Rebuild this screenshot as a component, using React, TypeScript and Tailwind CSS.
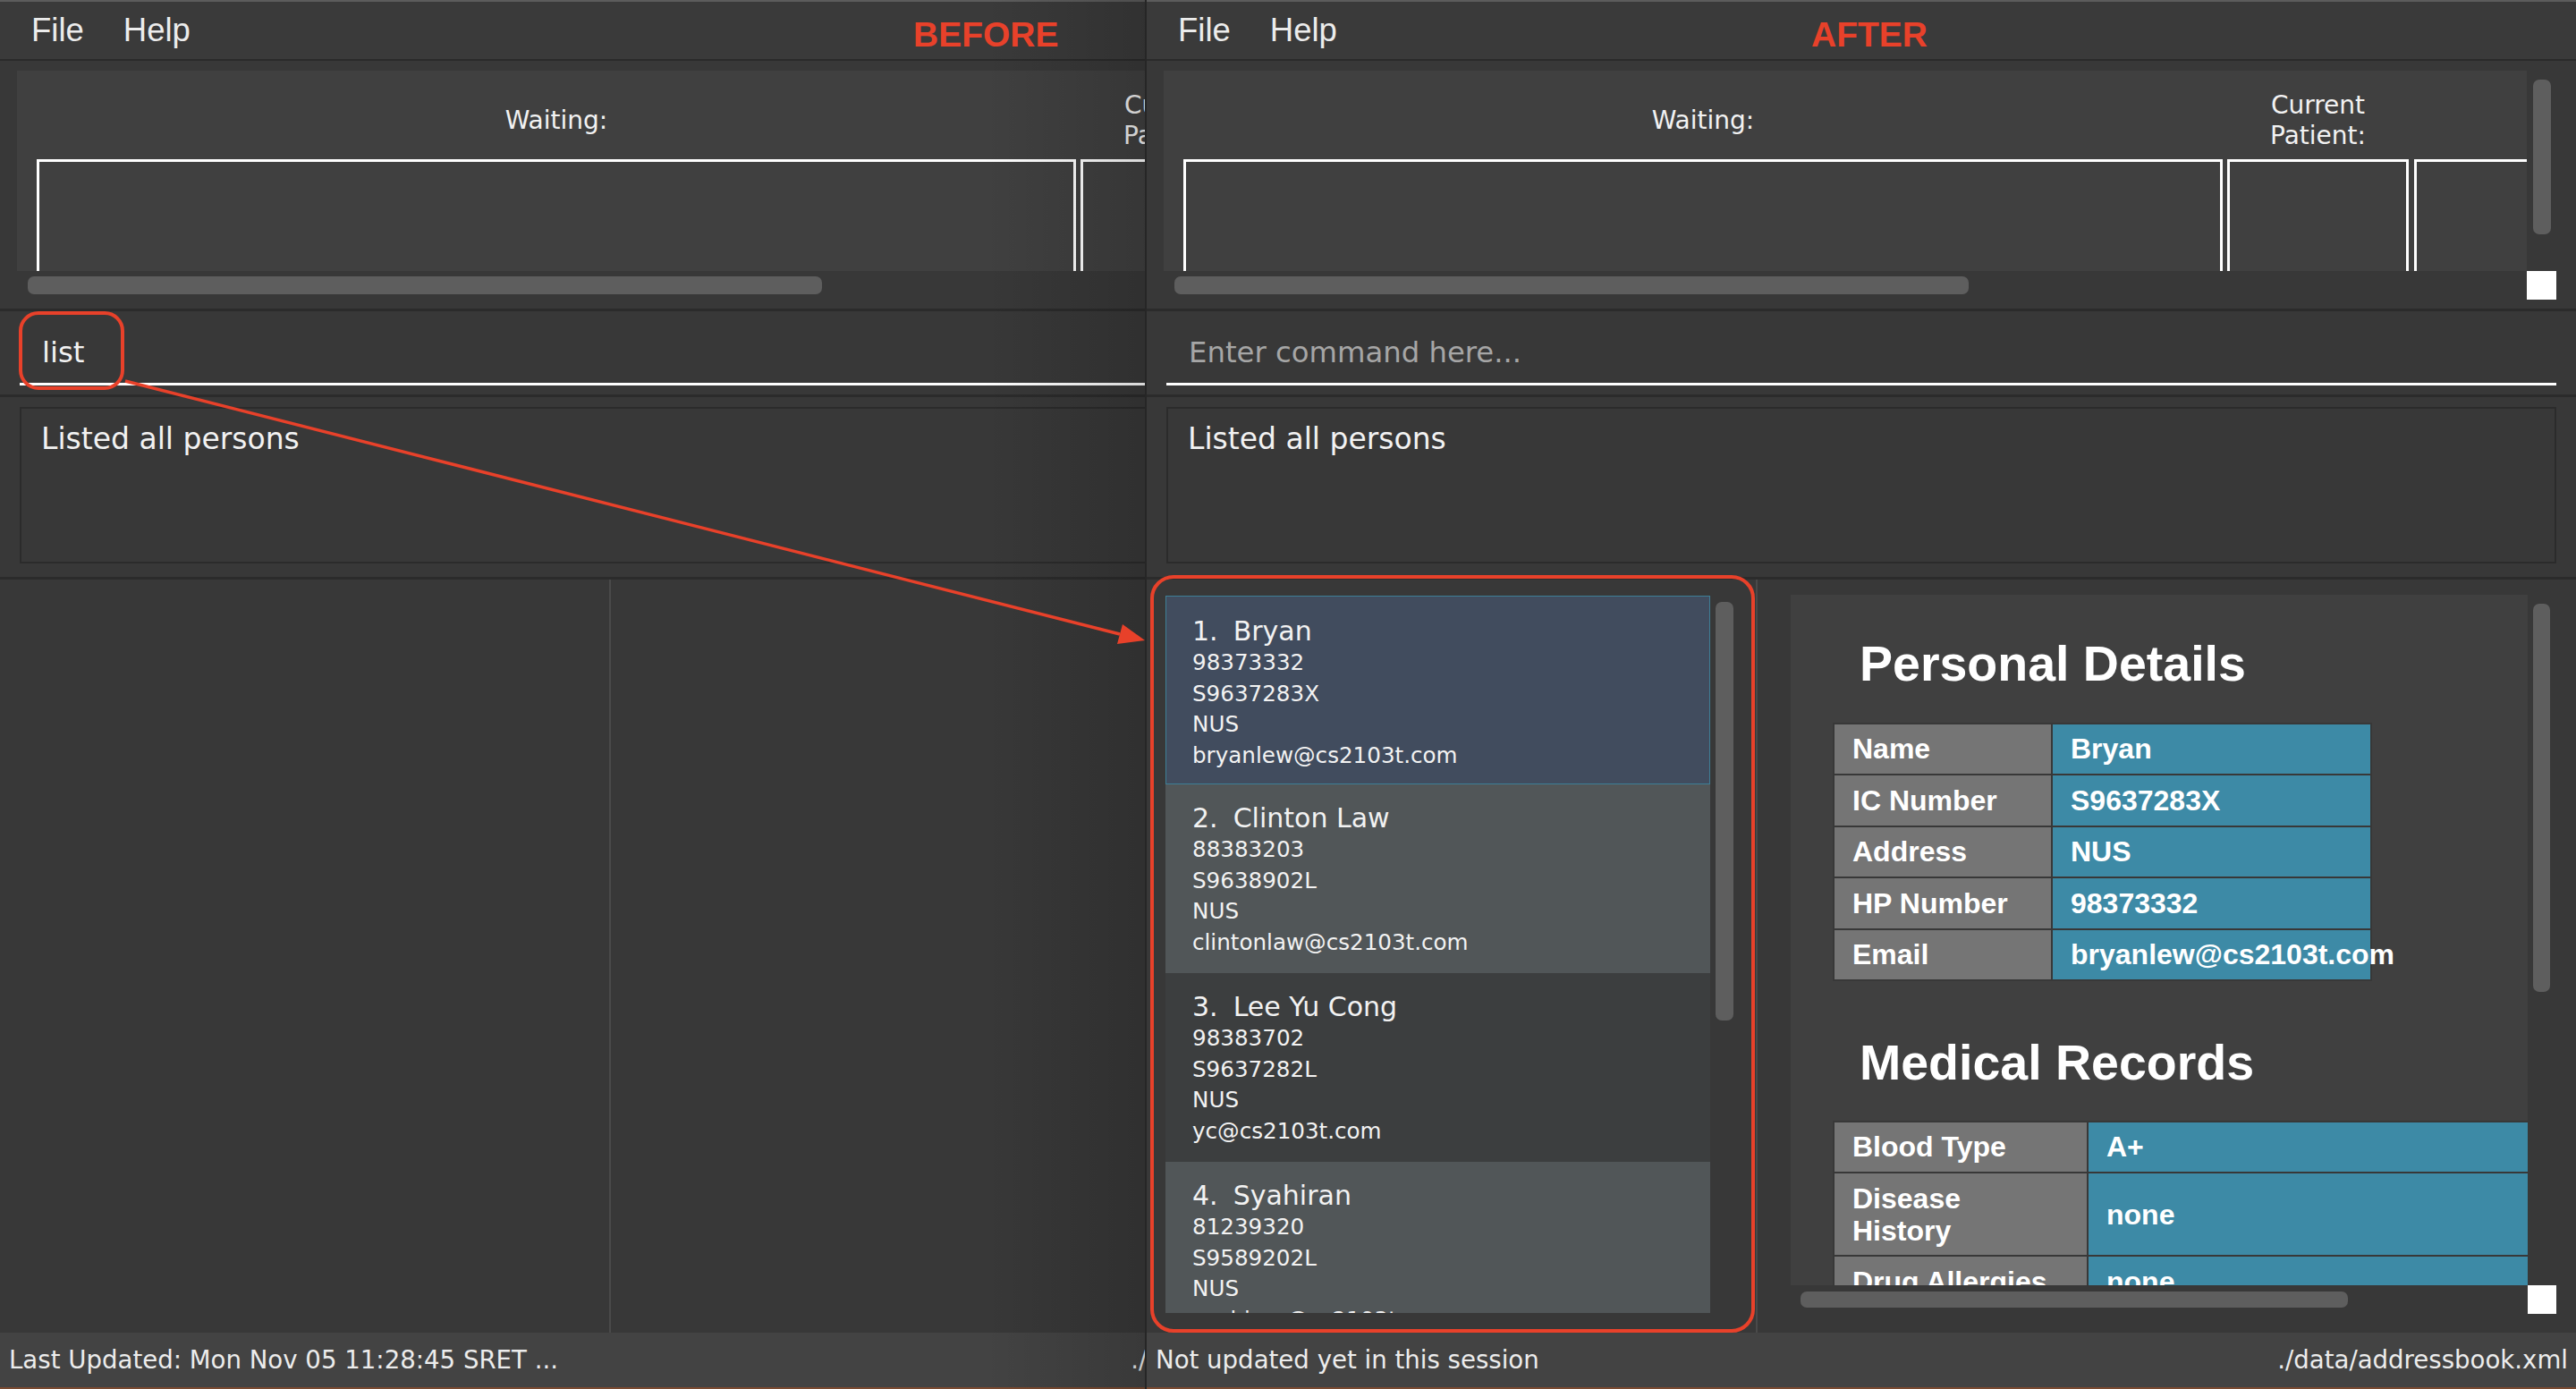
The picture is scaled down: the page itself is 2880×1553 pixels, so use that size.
import React from "react";

const SANS = "font-['Liberation_Sans',Arial,sans-serif]";
const DEJA = "font-['DejaVu_Sans',Verdana,sans-serif]";

type Person = {
  name: string;
  phone: string;
  ic: string;
  address: string;
  email: string;
};

const persons: Person[] = [
  { name: "Bryan", phone: "98373332", ic: "S9637283X", address: "NUS", email: "bryanlew@cs2103t.com" },
  { name: "Clinton Law", phone: "88383203", ic: "S9638902L", address: "NUS", email: "clintonlaw@cs2103t.com" },
  { name: "Lee Yu Cong", phone: "98383702", ic: "S9637282L", address: "NUS", email: "yc@cs2103t.com" },
  { name: "Syahiran", phone: "81239320", ic: "S9589202L", address: "NUS", email: "syahiran@cs2103t.com" },
];

const personalRows: [string, string][] = [
  ["Name", "Bryan"],
  ["IC Number", "S9637283X"],
  ["Address", "NUS"],
  ["HP Number", "98373332"],
  ["Email", "bryanlew@cs2103t.com"],
];

function MenuBar() {
  return (
    <div className={`h-[68px] shrink-0 flex items-center gap-[44px] pl-[35px] border-t-2 border-t-[#5c5c5c] border-b-2 border-b-[#2a2a2a] bg-[#3a3a3a] text-[36.5px] leading-none text-[#ececec] ${SANS}`}>
      <span>File</span>
      <span>Help</span>
    </div>
  );
}

function QueueColumn({ label, width }: { label: React.ReactNode; width: string }) {
  return (
    <div className={`${width} shrink-0 h-full flex flex-col`}>
      <div className="h-[99px] shrink-0 pt-[12px] flex items-center justify-center text-center text-[28px] leading-[34px] text-[#f2f2f2]">
        {label}
      </div>
      <div className="flex-1 border-t-[3px] border-x-[3px] border-white" />
    </div>
  );
}

function QueuePanel() {
  return (
    <div className={`h-[277px] shrink-0 pt-[11px] pl-[19px] pb-[10px] flex flex-col ${DEJA}`}>
      <div className="flex h-[224px]">
        <div className="w-[1524px] h-full bg-[#404040] overflow-hidden flex pl-[22px] gap-[5px]">
          <QueueColumn label="Waiting:" width="w-[1162px]" />
          <QueueColumn
            label={
              <span>
                Current
                <br />
                Patient:
              </span>
            }
            width="w-[203px]"
          />
          <QueueColumn label="" width="w-[220px] ml-[1px]" />
        </div>
        <div className="w-[33px] h-full pl-[7px] pt-[10px]">
          <div className="w-[20px] h-[173px] rounded-[7px] bg-[#5e5e5e]" />
        </div>
      </div>
      <div className="flex h-[32px]">
        <div className="w-[1524px] pl-[12px] pt-[6px]">
          <div className="w-[888px] h-[20px] rounded-[7px] bg-[#5e5e5e]" />
        </div>
        <div className="w-[33px] h-full bg-white" />
      </div>
    </div>
  );
}

function CommandBox({ value }: { value?: string }) {
  return (
    <div className={`h-[96px] shrink-0 border-t-[3px] border-[#2b2b2b] px-[22px] ${DEJA}`}>
      <div className="h-[83px] border-b-[3px] border-white flex items-end pb-[18px] pl-[25px] text-[32.3px] leading-none">
        {value ? (
          <span className="text-[#f2f2f2]">{value}</span>
        ) : (
          <span className="text-[#a6a6a6]">Enter command here...</span>
        )}
      </div>
    </div>
  );
}

function ResultDisplay() {
  return (
    <div className={`h-[204px] shrink-0 border-t-[3px] border-[#2b2b2b] px-[22px] pt-[11px] pb-[15px] ${DEJA}`}>
      <div className="h-full border-2 border-[#2b2b2b] pl-[22px] pt-[17px] text-[33px] leading-none text-[#f2f2f2]">
        Listed all persons
      </div>
    </div>
  );
}

function PersonCard({ p, index }: { p: Person; index: number }) {
  const tone =
    index === 0
      ? "bg-[#414c5e] border border-[#3e7f96] pt-[21px] pl-[29px]"
      : index % 2 === 1
        ? "bg-[#515658] pt-[20px] pl-[30px]"
        : "bg-[#3c3e3f] pt-[20px] pl-[30px]";
  return (
    <div className={`h-[211px] shrink-0 overflow-hidden text-[#f2f2f2] ${tone}`}>
      <div className="flex gap-[17px] text-[30px] leading-[36px]">
        <span>{index + 1}.</span>
        <span>{p.name}</span>
      </div>
      <div className="text-[24.6px] leading-[34.5px]">
        <div>{p.phone}</div>
        <div>{p.ic}</div>
        <div>{p.address}</div>
        <div>{p.email}</div>
      </div>
    </div>
  );
}

function PersonList() {
  return (
    <div className={`h-full pt-[18px] pl-[21px] pb-[22px] flex gap-[6px] ${DEJA}`}>
      <div className="w-[609px] h-full overflow-hidden flex flex-col bg-[#3a3a3a]">
        {persons.map((p, i) => (
          <PersonCard key={p.ic} p={p} index={i} />
        ))}
      </div>
      <div className="w-[20px] pt-[7px]">
        <div className="w-[20px] h-[468px] rounded-[7px] bg-[#5e5e5e]" />
      </div>
    </div>
  );
}

function Cell({ children, tone, tall }: { children: React.ReactNode; tone: "label" | "value"; tall?: boolean }) {
  return (
    <div
      className={`${tall ? "h-[91px]" : "h-[55.5px]"} flex items-center pl-[20px] whitespace-nowrap text-[32px] leading-[36px] font-bold text-white ${
        tone === "label" ? "bg-[#757575]" : "bg-[#3d8aa6]"
      }`}
    >
      {children}
    </div>
  );
}

function DetailsPanel() {
  return (
    <div className="h-full pt-[17px] pl-[37px]">
      <div className="flex">
        <div className={`w-[824px] h-[772px] bg-[#404040] overflow-hidden ${SANS}`}>
          <div className="pt-[50px] pl-[47px] flex flex-col items-start w-max">
            <div className="ml-[30px] text-[55.5px] leading-none font-bold text-white">Personal Details</div>
            <div className="mt-[37px] grid grid-cols-[242px_355px] gap-[2px] p-[2px] bg-[#383838]">
              {personalRows.map(([k, v]) => (
                <React.Fragment key={k}>
                  <Cell tone="label">{k}</Cell>
                  <Cell tone="value">{v}</Cell>
                </React.Fragment>
              ))}
            </div>
            <div className="mt-[64px] ml-[30px] text-[55.5px] leading-none font-bold text-white">Medical Records</div>
            <div className="mt-[36px] grid grid-cols-[282px_700px] gap-[2px] p-[2px] bg-[#383838]">
              <Cell tone="label">Blood Type</Cell>
              <Cell tone="value">A+</Cell>
              <Cell tone="label" tall>
                <span>
                  Disease
                  <br />
                  History
                </span>
              </Cell>
              <Cell tone="value" tall>
                none
              </Cell>
              <Cell tone="label">Drug Allergies</Cell>
              <Cell tone="value">none</Cell>
            </div>
          </div>
        </div>
        <div className="w-[32px] h-[772px] pl-[6px] pt-[10px]">
          <div className="w-[19px] h-[434px] rounded-[7px] bg-[#5e5e5e]" />
        </div>
      </div>
      <div className="flex h-[32px]">
        <div className="w-[824px] pl-[11px] pt-[7px]">
          <div className="w-[612px] h-[18px] rounded-[7px] bg-[#5e5e5e]" />
        </div>
        <div className="w-[32px] h-[32px] bg-white" />
      </div>
    </div>
  );
}

function StatusBar({ left }: { left: string }) {
  return (
    <>
      <div className={`h-[61px] shrink-0 bg-[#434343] flex items-center justify-between pl-[10px] pr-[9px] text-[27.6px] leading-none text-[#ececec] ${DEJA}`}>
        <span>{left}</span>
        <span>./data/addressbook.xml</span>
      </div>
      <div className="h-[2px] shrink-0 bg-[#7a4a30]" />
    </>
  );
}

function Pane({ after }: { after: boolean }) {
  return (
    <div className="w-[1598px] h-[1553px] flex flex-col bg-[#383838]">
      <MenuBar />
      <QueuePanel />
      <CommandBox value={after ? undefined : "list"} />
      <ResultDisplay />
      <div className="flex-1 min-h-0 border-t-[3px] border-[#2b2b2b] flex">
        <div className="w-[681px] h-full">{after && <PersonList />}</div>
        <div className="w-[2px] h-full bg-[#4a4a4a]" />
        <div className="flex-1 h-full">{after && <DetailsPanel />}</div>
      </div>
      <StatusBar left={after ? "Not updated yet in this session" : "Last Updated: Mon Nov 05 11:28:45 SRET ..."} />
    </div>
  );
}

export default function App() {
  return (
    <div className="relative w-[2880px] h-[1553px] overflow-hidden bg-[#383838] flex">
      <div className="relative w-[1280px] h-full overflow-hidden shrink-0">
        <Pane after={false} />
        <div className="absolute inset-y-0 right-0 w-[180px] bg-linear-to-r from-transparent to-black/15 pointer-events-none" />
      </div>
      <div className="w-[2px] h-full bg-[#262626] shrink-0" />
      <div className="w-[1598px] h-full overflow-hidden shrink-0">
        <Pane after />
      </div>

      {/* annotation layer */}
      <span className={`absolute left-[1021px] top-[19px] text-[39px] leading-none font-bold text-[#e8412a] ${SANS}`}>BEFORE</span>
      <span className={`absolute left-[2025px] top-[19px] text-[39px] leading-none font-bold text-[#e8412a] ${SANS}`}>AFTER</span>
      <svg className="absolute inset-0 pointer-events-none" width="2880" height="1553" viewBox="0 0 2880 1553">
        <rect x="23" y="350" width="114" height="84" rx="20" fill="none" stroke="#e8412a" strokeWidth="4" />
        <rect x="1288" y="645" width="672" height="843" rx="24" fill="none" stroke="#e8412a" strokeWidth="4" />
        <line x1="140" y1="426" x2="1252" y2="709" stroke="#e8412a" strokeWidth="3.5" />
        <polygon points="1280,716 1249,720 1255,698" fill="#e8412a" />
      </svg>
    </div>
  );
}
